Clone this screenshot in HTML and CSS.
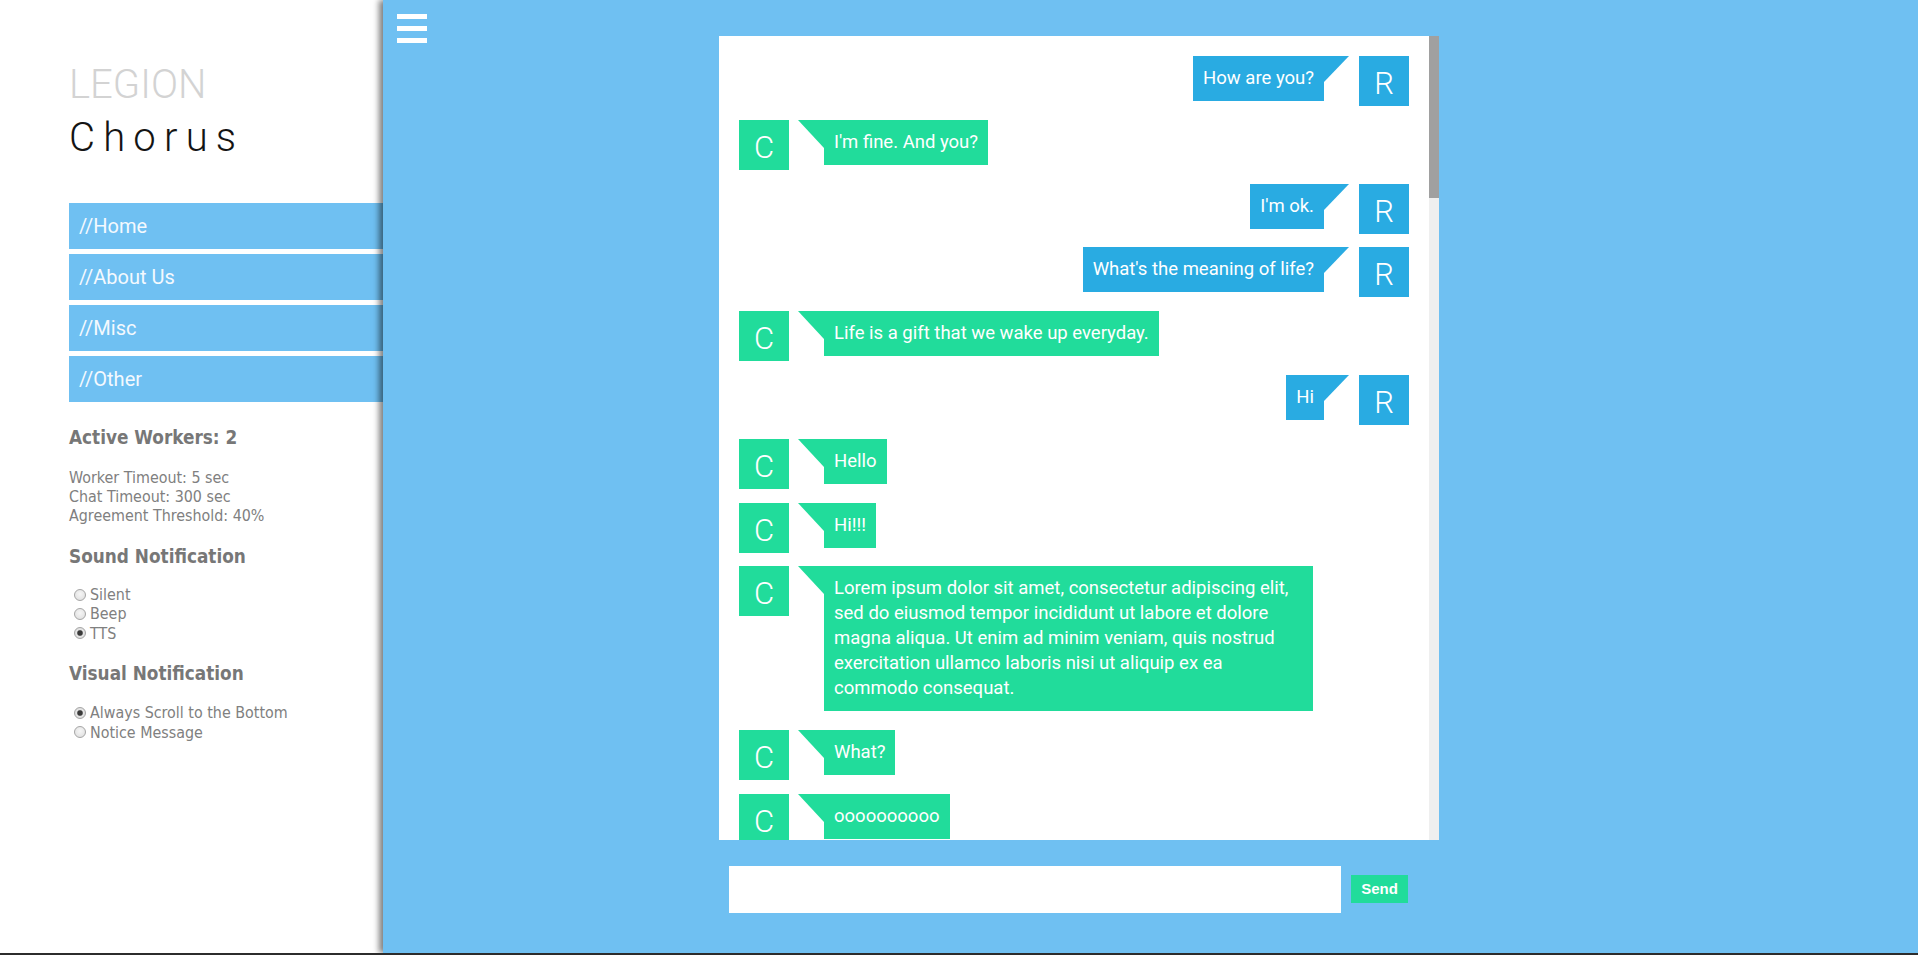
FILE: index.html
```html
<!DOCTYPE html>
<html lang="en">
<head>
<meta charset="utf-8">
<title>LEGION Chorus</title>
<link rel="stylesheet" href="styles.css">
</head>
<body>
<div class="app">
  <aside class="sidebar">
    <div class="brand">
      <div class="brand-top">LEGION</div>
      <div class="brand-name">Chorus</div>
    </div>
    <nav class="nav">
      <a class="nav-item" href="#">//Home</a>
      <a class="nav-item" href="#">//About Us</a>
      <a class="nav-item" href="#">//Misc</a>
      <a class="nav-item" href="#">//Other</a>
    </nav>
    <h3 class="side-heading workers">Active Workers: 2</h3>
    <div class="info">
      <div class="info-line">Worker Timeout: 5 sec</div>
      <div class="info-line">Chat Timeout: 300 sec</div>
      <div class="info-line">Agreement Threshold: 40%</div>
    </div>
    <h3 class="side-heading sound">Sound Notification</h3>
    <div class="options sound-options">
      <label class="option"><input class="radio" type="radio" name="sound">Silent</label>
      <label class="option"><input class="radio" type="radio" name="sound">Beep</label>
      <label class="option"><input class="radio" type="radio" name="sound" checked>TTS</label>
    </div>
    <h3 class="side-heading visual">Visual Notification</h3>
    <div class="options visual-options">
      <label class="option"><input class="radio" type="radio" name="visual" checked>Always Scroll to the Bottom</label>
      <label class="option"><input class="radio" type="radio" name="visual">Notice Message</label>
    </div>
  </aside>

  <main class="main">
    <button class="menu" type="button" aria-label="Menu"><span class="bar"></span><span class="bar"></span><span class="bar"></span></button>
    <section class="chat">
      <div class="panel">
        <div class="messages">
          <div class="row me"><div class="bubble">How are you?</div><div class="avatar">R</div></div>
          <div class="row bot"><div class="avatar">C</div><div class="bubble">I'm fine. And you?</div></div>
          <div class="row me"><div class="bubble">I'm ok.</div><div class="avatar">R</div></div>
          <div class="row me"><div class="bubble">What's the meaning of life?</div><div class="avatar">R</div></div>
          <div class="row bot"><div class="avatar">C</div><div class="bubble">Life is a gift that we wake up everyday.</div></div>
          <div class="row me"><div class="bubble">Hi</div><div class="avatar">R</div></div>
          <div class="row bot"><div class="avatar">C</div><div class="bubble">Hello</div></div>
          <div class="row bot"><div class="avatar">C</div><div class="bubble">Hi!!!</div></div>
          <div class="row bot"><div class="avatar">C</div><div class="bubble">Lorem ipsum dolor sit amet, consectetur adipiscing elit, sed do eiusmod tempor incididunt ut labore et dolore magna aliqua. Ut enim ad minim veniam, quis nostrud exercitation ullamco laboris nisi ut aliquip ex ea commodo consequat.</div></div>
          <div class="row bot"><div class="avatar">C</div><div class="bubble">What?</div></div>
          <div class="row bot"><div class="avatar">C</div><div class="bubble">oooooooooo</div></div>
        </div>
        <div class="scrollbar"><div class="thumb"></div></div>
      </div>
      <div class="composer">
        <input class="composer-input" type="text" aria-label="Message">
        <button class="send" type="button">Send</button>
      </div>
    </section>
  </main>
</div>
</body>
</html>
```

FILE: styles.css
```css
* { box-sizing: border-box; }

html, body {
  margin: 0;
  padding: 0;
}

body {
  background: #2c2c2c;
  overflow: hidden;
}

.app {
  display: flex;
  height: calc(100vh - 2px);
  background: #ffffff;
}

/* ---------- Sidebar ---------- */
.sidebar {
  width: 383px;
  flex: none;
  background: #ffffff;
  padding: 58px 0 0 69px;
  font-family: "DejaVu Sans Condensed", "DejaVu Sans", sans-serif;
  font-stretch: condensed;
  color: #808080;
}

.brand {
  font-family: Roboto, "Liberation Sans", sans-serif;
  font-stretch: normal;
  font-weight: 300;
  font-size: 40px;
  line-height: 53px;
}

.brand-top {
  color: #d3d3d3;
}

.brand-name {
  color: #141414;
  letter-spacing: 8.2px;
}

.nav {
  margin-top: 39px;
  display: flex;
  flex-direction: column;
  gap: 5px;
}

.nav-item {
  display: block;
  height: 46px;
  line-height: 47px;
  padding-left: 10px;
  background: #6fc0f2;
  color: #f4f9fe;
  font-family: Roboto, "Liberation Sans", sans-serif;
  font-stretch: normal;
  font-size: 20px;
  text-decoration: none;
}

.side-heading {
  margin: 0;
  font-size: 18.8px;
  line-height: 22px;
  font-weight: bold;
  color: #777777;
}

.workers { margin-top: 25px; }
.sound { margin-top: 20.5px; }
.visual { margin-top: 20px; }

.info {
  margin-top: 19px;
  font-size: 15.9px;
  line-height: 19.2px;
}

.options {
  display: flex;
  flex-direction: column;
  font-size: 15.9px;
}

.sound-options { margin-top: 17px; }
.visual-options { margin-top: 18.7px; }

.option {
  display: flex;
  align-items: center;
  height: 19.2px;
}

.radio {
  -webkit-appearance: none;
  appearance: none;
  width: 12px;
  height: 12px;
  margin: 0 4px 0 5px;
  border: 1px solid #a5a5a5;
  border-radius: 50%;
  background: radial-gradient(circle at 50% 40%, #f6f6f6 0, #dcdcdc 100%);
  flex: none;
}

.radio:checked {
  background: radial-gradient(circle, #3a3a3a 0 2.2px, #8a8a8a 2.8px, #e6e6e6 3.4px, #d4d4d4 100%);
}

/* ---------- Main ---------- */
.main {
  position: relative;
  z-index: 1;
  flex: 1;
  display: flex;
  align-items: flex-start;
  background: #6fc0f2;
  box-shadow: -4px 0 6px rgba(0, 0, 0, 0.5);
}

.menu {
  margin: 14px 0 0 14px;
  padding: 0;
  width: 30px;
  border: 0;
  background: none;
  display: flex;
  flex-direction: column;
  gap: 7px;
  cursor: pointer;
}

.bar {
  display: block;
  width: 30px;
  height: 5px;
  background: #ffffff;
}

.chat {
  margin: 36px 0 0 292px;
  width: 720px;
}

.panel {
  display: flex;
  height: 804px;
  background: #ffffff;
}

.messages {
  flex: 1;
  overflow: hidden;
  padding: 20px 20px 0 20px;
  font-family: Roboto, "Liberation Sans", sans-serif;
}

.scrollbar {
  width: 10px;
  flex: none;
  background: #efefef;
}

.thumb {
  height: 162px;
  background: #a0a0a0;
}

.row {
  display: flex;
  align-items: flex-start;
  margin-bottom: 18.8px;
}

.row.me { justify-content: flex-end; }

.avatar {
  width: 50px;
  height: 50px;
  flex: none;
  margin-bottom: -5px;
  padding-top: 5px;
  line-height: 45px;
  text-align: center;
  font-size: 31px;
  font-weight: 300;
  color: #ffffff;
}

.bubble {
  position: relative;
  max-width: 489px;
  padding: 10px;
  font-size: 18.5px;
  line-height: 25px;
  color: #ffffff;
}

.me .avatar, .me .bubble { background: #29abe2; }
.bot .avatar, .bot .bubble { background: #21dc9b; }

.me .bubble { margin-right: 35px; }
.bot .bubble { margin-left: 35px; }

.me .bubble::after {
  content: "";
  position: absolute;
  top: 0;
  right: -25px;
  border-top: 26px solid #29abe2;
  border-right: 25px solid transparent;
}

.bot .bubble::before {
  content: "";
  position: absolute;
  top: 0;
  left: -26px;
  border-top: 28px solid #21dc9b;
  border-left: 26px solid transparent;
}

/* ---------- Composer ---------- */
.composer {
  display: flex;
  align-items: center;
  margin-top: 26px;
  padding-left: 10px;
}

.composer-input {
  width: 612px;
  height: 47px;
  border: 0;
  margin: 0;
  padding: 0 10px;
  background: #ffffff;
  outline: none;
}

.send {
  margin: -2px 0 0 10px;
  width: 57px;
  height: 28px;
  padding: 0;
  border: 0;
  background: #21dc9b;
  color: #ffffff;
  font-family: "Liberation Sans", Arial, sans-serif;
  font-weight: bold;
  font-size: 15px;
  cursor: pointer;
}
```
